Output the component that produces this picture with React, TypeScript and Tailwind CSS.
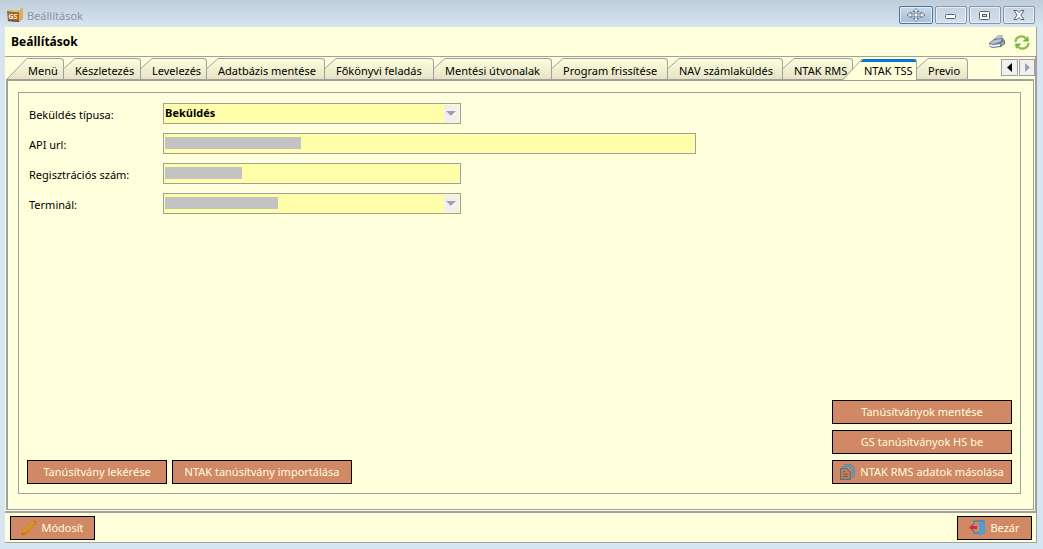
import type { ReactNode } from "react";

type Tab = { label: string; width: string };

const tabs: Tab[] = [
  { label: "Menü", width: "w-[57px]" },
  { label: "Készletezés", width: "w-[77px]" },
  { label: "Levelezés", width: "w-[66px]" },
  { label: "Adatbázis mentése", width: "w-[118px]" },
  { label: "Főkönyvi feladás", width: "w-[109px]" },
  { label: "Mentési útvonalak", width: "w-[118px]" },
  { label: "Program frissítése", width: "w-[116px]" },
  { label: "NAV számlaküldés", width: "w-[115px]" },
  { label: "NTAK RMS", width: "w-[70px]" },
  { label: "NTAK TSS", width: "w-[64px]" },
  { label: "Previo", width: "w-[51px]" },
];

function TabSlope({ first }: { first: boolean }) {
  const w = first ? 20 : 11;
  return (
    <svg width={w} height="21" viewBox={`0 0 ${w} 21`} className="block shrink-0" aria-hidden="true">
      <defs>
        <linearGradient id={`slope${w}`} x1="0" y1="0" x2="0" y2="21" gradientUnits="userSpaceOnUse">
          <stop offset="0" stopColor="#ffffe0" />
          <stop offset="1" stopColor="#e4e4c4" />
        </linearGradient>
      </defs>
      <path d={first ? "M0 21L20 0V21Z" : "M0 21V10.5L11 0V21Z"} fill={`url(#slope${w})`} />
      <path d={first ? "M0 21L20 .5" : "M0 10.5L11 .5"} stroke="#a0a0a0" fill="none" />
    </svg>
  );
}

function TabButton({ tab, first, active }: { tab: Tab; first: boolean; active: boolean }) {
  return (
    <button
      type="button"
      role="tab"
      aria-selected={active}
      className={`relative flex h-[21px] shrink-0 whitespace-nowrap ${tab.width} ${active ? "z-10" : ""}`}
    >
      {active ? (
        <>
          <svg width="22" height="22" viewBox="0 0 22 22" className="absolute top-0 -left-[10px]" aria-hidden="true">
            <path d="M0 22L19 1H22V22Z" fill="#ffffdc" />
            <path d="M0 21.5L19 1" stroke="#a0a0a0" fill="none" />
            <path d="M17.500 4L20 1H22V4Z" fill="#0078d7" />
          </svg>
          <span className="ml-[11px] h-[22px] flex-1 rounded-tr-sm border-r border-[#a0a0a0] bg-[#ffffdc] pt-px">
            <span className="block h-[3px] rounded-tr-xs bg-[#0078d7]" />
          </span>
        </>
      ) : (
        <>
          <TabSlope first={first} />
          <span className="h-[21px] flex-1 rounded-tr-sm border-t border-r border-[#a0a0a0] bg-linear-to-b from-[#ffffe0] to-[#e4e4c4]" />
        </>
      )}
      <span className={`absolute top-[5px] leading-4 ${first ? "left-[21px]" : "left-[11px]"}`}>{tab.label}</span>
    </button>
  );
}

function ActionButton({ className, children }: { className: string; children: ReactNode }) {
  return (
    <button
      type="button"
      className={`flex h-6 items-center justify-center whitespace-nowrap border border-black bg-[#d08865] leading-4 text-[#ffffdc] ${className}`}
    >
      {children}
    </button>
  );
}

function WindowButton({ label, active = false, children }: { label: string; active?: boolean; children: ReactNode }) {
  return (
    <button
      type="button"
      aria-label={label}
      className={`flex h-[18px] items-center justify-center rounded-xs border shadow-[inset_0_0_0_1px_#e5eef7] ${
        active
          ? "w-[34px] border-[#54718f] bg-linear-to-b from-[#c7d9ec] to-[#a5bfda]"
          : "w-8 border-[#8795a5] bg-linear-to-b from-[#c5d2df] to-[#d3e0ed]"
      }`}
    >
      {children}
    </button>
  );
}

function Field({ id, label, wide, select, value, bar }: {
  id: string;
  label: string;
  wide?: boolean;
  select?: boolean;
  value?: string;
  bar?: string;
}) {
  const box = "block h-[21px] w-full appearance-none rounded-none border border-[#a0a0a0] bg-[#ffffaa] pl-px pb-0.5 font-['Open_Sans','Noto_Sans',sans-serif] font-bold leading-4 outline-none";
  return (
    <div className="flex">
      <label htmlFor={id} className="w-[134px] shrink-0 pt-1 leading-4">{label}</label>
      <div className={`relative ${wide ? "w-[533px]" : "w-[298px]"}`}>
        {select ? (
          <select id={id} className={box}>
            <option>{value}</option>
          </select>
        ) : (
          <input id={id} type="text" className={box} />
        )}
        {bar && <span className={`pointer-events-none absolute top-1 left-0.5 h-3 bg-[#c3c3c3] ${bar}`} />}
        {select && (
          <span className="pointer-events-none absolute top-0.5 right-0.5 flex h-[17px] w-[15px] items-center justify-center bg-[#f0f0f0]">
            <svg width="11" height="7" viewBox="0 0 11 7" aria-hidden="true">
              <path d="M1 2H11L6 7Z" fill="#fff" />
              <path d="M0 1H10L5 6Z" fill="#a0a0a0" />
            </svg>
          </span>
        )}
      </div>
    </div>
  );
}

export default function App() {
  return (
    <div className="flex min-h-screen flex-col bg-[#d7e4f2] pr-1.5 pb-1.5 pl-[5px] font-['Noto_Sans','Open_Sans',sans-serif] text-[11px] text-black">
      <header className="-mr-1.5 -ml-[5px] flex h-[27px] shrink-0 bg-linear-to-b from-[#bfcddb] to-[#d7e4f2] pr-2 pl-[7px]">
        <svg width="17" height="16" viewBox="0 0 17 16" className="mt-[7px]" aria-hidden="true">
          <path d="M0 4L11 5L16 1V11L12 15L1 14Z" fill="#9a6b2c" />
          <path d="M0 4L11 5L16 1L13 3L1 3Z" fill="#e3bf77" />
          <path d="M12 4L16 0V12L12 15Z" fill="#dfae5c" />
          <path d="M1 13L12 14V15L1 14Z" fill="#704719" />
          <text x="1.500" y="11.500" fontSize="7" fontWeight="700" fill="#fff4df">GS</text>
        </svg>
        <h1 className="mt-2 ml-[3px] leading-4 text-[#8c949d]">Beállítások</h1>
        <div className="mt-1.5 ml-auto flex gap-0.5">
          <WindowButton label="Mozgatás" active>
            <svg width="20" height="14" viewBox="0 0 20 14" aria-hidden="true">
              <path d="M10 .5L13 3.500H11V6H15V4L19 7L15 10V8H11V10.500H13L10 13.500L7 10.500H9V8H5V10L1 7L5 4V6H9V3.500H7Z" fill="#edf1f5" stroke="#596575" strokeWidth=".8" />
            </svg>
          </WindowButton>
          <WindowButton label="Kis méret">
            <svg width="12" height="5" viewBox="0 0 12 5" className="mt-0.5" aria-hidden="true">
              <rect x=".5" y=".5" width="10" height="4" rx="1" fill="#fff" stroke="#596070" />
            </svg>
          </WindowButton>
          <WindowButton label="Teljes méret">
            <svg width="12" height="9" viewBox="0 0 12 9" aria-hidden="true">
              <rect x=".5" y=".5" width="10" height="8" rx="1" fill="#fff" stroke="#596070" />
              <rect x="3.500" y="3.500" width="4" height="2" fill="#d4dce6" stroke="#596070" />
            </svg>
          </WindowButton>
          <WindowButton label="Bezárás">
            <svg width="12" height="10" viewBox="0 0 12 10" aria-hidden="true">
              <path d="M1 .5H4L6 2.500L8 .5H11L7.800 5L11 9.500H8L6 7.500L4 9.500H1L4.200 5Z" fill="#fff" stroke="#596070" />
            </svg>
          </WindowButton>
        </div>
      </header>

      <main className="flex flex-1 flex-col border-b border-[#a0a0a0] bg-[#ffffdc]">
        <div className="flex h-[30px] shrink-0 items-center border-r border-b border-[#a0a0a0] pt-px pr-1.5 pl-1.5">
          <h2 className="font-['Open_Sans','Noto_Sans',sans-serif] text-[12px] leading-4 font-bold">Beállítások</h2>
          <div className="ml-auto flex items-center gap-2">
            <button type="button" aria-label="Nyomtatás">
              <svg width="17" height="14" viewBox="0 0 17 14" className="block" aria-hidden="true">
                <path d="M5 4L10 0L14 1L11 5Z" fill="#b9c6d2" stroke="#8997a6" strokeWidth=".6" />
                <path d="M0 8L5 4L14 3L16 6V9L12 12L4 13L1 12Z" fill="#6d7b8d" />
                <path d="M1 8L5 5L13 4L11 7L4 9Z" fill="#b4c1ce" />
                <path d="M1 9L4 10L11 9V11L4 12L1 11Z" fill="#e8eef2" />
                <path d="M12 8L15 6V9L12 11Z" fill="#98a7b6" />
              </svg>
            </button>
            <button type="button" aria-label="Frissítés">
              <svg width="16" height="15" viewBox="0 0 16 15" className="block" fill="none" aria-hidden="true">
                <path d="M1.500 7A6 6 0 0 1 11.800 3.200" stroke="#86bd4d" strokeWidth="2.300" />
                <path d="M14.500 8A6 6 0 0 1 4.200 11.800" stroke="#86bd4d" strokeWidth="2.300" />
                <path d="M8.500 6.500H15L14 1Z" fill="#79b53e" />
                <path d="M1 8.500H7.500L2 14Z" fill="#79b53e" />
              </svg>
            </button>
          </div>
        </div>

        <section className="flex flex-1 flex-col border-r-2 border-b-2 border-[#a0a0a0] pt-px pb-px pl-px">
          <div className="flex justify-between">
            <div role="tablist" className="flex pl-px">
              {tabs.map((tab, i) => (
                <TabButton key={tab.label} tab={tab} first={i === 0} active={tab.label === "NTAK TSS"} />
              ))}
            </div>
            <div className="mt-px flex h-[17px]">
              <button type="button" aria-label="Előző fülek" className="flex w-[17px] items-center justify-center border border-[#a0a0a0] bg-[#f0f0f0]">
                <svg width="5" height="9" viewBox="0 0 5 9" aria-hidden="true"><path d="M5 0V9L0 4.500Z" fill="#000" /></svg>
              </button>
              <button type="button" aria-label="Következő fülek" className="ml-px flex w-[16px] items-center justify-center border border-[#a0a0a0] bg-[#f0f0f0]">
                <svg width="5" height="9" viewBox="0 0 5 9" aria-hidden="true"><path d="M0 0V9L5 4.500Z" fill="#a0a0a0" /></svg>
              </button>
            </div>
          </div>

          <div role="tabpanel" className="mr-px flex flex-1 border-t-2 border-r border-b border-l-2 border-[#a0a0a0] pt-[11px] pr-3 pb-[15px] pl-2.5">
            <form className="flex flex-1 flex-col border border-[#a0a0a0] px-2 pt-2.5 pb-[9px]">
              <div className="flex flex-col gap-[9px] pl-0.5">
                <Field id="type" label="Beküldés típusa:" select value="Beküldés" />
                <Field id="api" label="API url:" wide bar="w-[136px]" />
                <Field id="reg" label="Regisztrációs szám:" bar="w-[77px]" />
                <Field id="terminal" label="Terminál:" select bar="w-[113px]" />
              </div>
              <div className="mt-auto flex items-end justify-between">
                <div className="flex gap-[5px]">
                  <ActionButton className="w-[140px]">Tanúsítvány lekérése</ActionButton>
                  <ActionButton className="w-[180px]">NTAK tanúsítvány importálása</ActionButton>
                </div>
                <div className="flex flex-col gap-1.5">
                  <ActionButton className="w-[180px]">Tanúsítványok mentése</ActionButton>
                  <ActionButton className="w-[180px]">GS tanúsítványok HS be</ActionButton>
                  <ActionButton className="w-[180px] gap-1">
                    <svg width="16" height="16" viewBox="0 0 16 16" fill="none" className="shrink-0" aria-hidden="true">
                      <path d="M4 .7H11L14.300 4V13.500" stroke="#4b91bd" strokeWidth="1.300" />
                      <path d="M2.500 3.500V2.700H9L12.300 6V14.500" stroke="#4b91bd" strokeWidth="1.200" />
                      <path d="M.6 4.500H6.500L10.300 8V15.400H.6Z" fill="#c27e5e" stroke="#5a7182" strokeWidth="1.200" />
                      <path d="M3 7.500H5M3 10H8M3 12.500H8" stroke="#815044" />
                    </svg>
                    NTAK RMS adatok másolása
                  </ActionButton>
                </div>
              </div>
            </form>
          </div>
        </section>

        <footer className="flex h-[29px] shrink-0 justify-between border-r border-[#a0a0a0] pt-[3px] pr-1 pl-[5px]">
          <ActionButton className="w-[85px] gap-1">
            <svg width="16" height="16" viewBox="0 0 16 16" aria-hidden="true">
              <path d="M1 15L1.500 11.500L12 1.500Q15 0 14.500 4L4.500 14Z" fill="#c5811d" stroke="#b57511" />
              <path d="M2 12L12.500 2" stroke="#e8ac1b" strokeWidth="1.200" />
              <path d="M4.500 13L14 4" stroke="#e8a31b" />
            </svg>
            Módosít
          </ActionButton>
          <ActionButton className="w-[75px] gap-1">
            <svg width="17" height="16" viewBox="0 0 17 16" aria-hidden="true">
              <path d="M5 5V1H15V13H11M5 10V13H10" fill="none" stroke="#4086b3" strokeWidth="1.300" />
              <path d="M10 3L15.500 1V13L10 16Z" fill="#4e9fd2" />
              <path d="M0 7.500L4 4V6H8V9H4V11Z" fill="#c82d42" />
            </svg>
            Bezár
          </ActionButton>
        </footer>
      </main>
    </div>
  );
}
